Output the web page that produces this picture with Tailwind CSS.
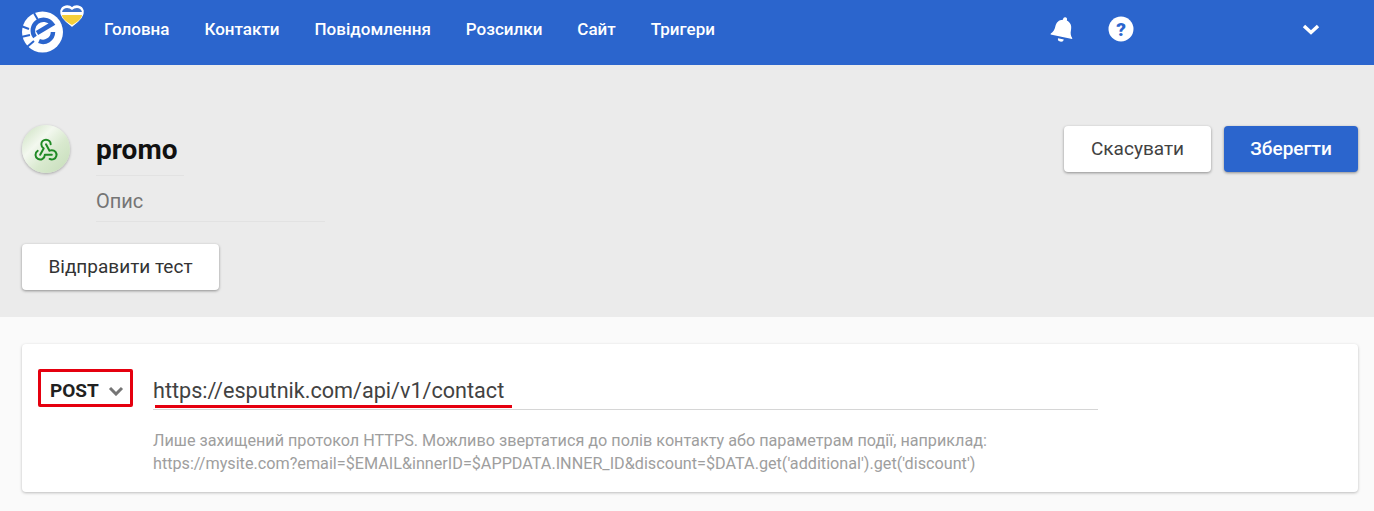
<!DOCTYPE html>
<html lang="uk">
<head>
    <meta charset="UTF-8">
    <title>promo</title>
    <script src="https://cdn.jsdelivr.net/npm/@tailwindcss/browser@4"></script>
</head>
<body class="bg-[#fafafa] font-['Roboto',sans-serif] text-[#212121] h-[511px] overflow-hidden">
    <nav class="h-[65px] bg-[#2b65cd] flex items-center text-white">
        <div class="relative w-[104px] h-[65px] shrink-0">
            <svg class="absolute left-[20px] top-[4px]" width="66" height="50" viewBox="0 0 66 50">
                <!-- logo: white disc, blue e, cuts on the left edge -->
                <circle cx="22.5" cy="28" r="20.5" fill="#fff"/>
                <path d="M1 22l8 3M1 33l9-2M7 43l7-6M14 9l4 7" fill="none" stroke="#2b65cd" stroke-width="2"/>
                <path d="M15 33a10 10 0 0 1 17-13l-15 9" fill="none" stroke="#2b65cd" stroke-width="4.5"/>
                <path d="M33 28a10 10 0 0 1-14 9" fill="none" stroke="#2b65cd" stroke-width="4.5"/>
                <path d="M52 4c3-3 10-3 11 3 1 5-4 10-11 15-7-5-12-10-11-15 1-6 8-6 11-3z" fill="#fff" stroke="#fff" stroke-width="1.5"/>
                <path d="M52 6c3-3 9-3 10 2H42c1-5 7-5 10-2z" fill="#3f72c8"/>
                <path d="M42 11h20c0 3-4 7-10 10-6-3-10-7-10-10z" fill="#f5cf3a"/>
            </svg>
        </div>
        <ul class="flex gap-[35px] text-[17px] leading-[20px] font-medium -mt-[7px]">
            <li>Головна</li>
            <li>Контакти</li>
            <li>Повідомлення</li>
            <li>Розсилки</li>
            <li>Сайт</li>
            <li>Тригери</li>
        </ul>
        <div class="ml-auto flex items-center -mt-[7px]">
            <svg class="rotate-[12deg]" width="24" height="26" viewBox="0 0 24 26" fill="#fff"><path d="M12 1a2 2 0 0 1 2 2v1c4 1 6 4 6 8 0 4 1 6 3 8v1H1v-1c2-2 3-4 3-8 0-4 2-7 6-8V3a2 2 0 0 1 2-2zM9 23h6a3 3 0 0 1-6 0z"/></svg>
            <svg class="ml-[33px]" width="26" height="26" viewBox="0 0 26 26"><circle cx="13" cy="13" r="12.5" fill="#fff"/><text x="13" y="19.5" text-anchor="middle" font-size="19" font-weight="900" font-family="Roboto" fill="#2b65cd">?</text></svg>
            <svg class="ml-[168px] mr-[54px]" width="18" height="11" viewBox="0 0 18 11"><path d="M2 2l7 6.5L16 2" fill="none" stroke="#fff" stroke-width="3.4"/></svg>
        </div>
    </nav>

    <section class="h-[252px] bg-[#ebebeb] pl-[22px] pr-[16px] flex justify-between">
        <div>
            <div class="flex mt-[60px]">
                <div class="w-[48px] h-[48px] rounded-full bg-[linear-gradient(135deg,#cfe3c4_5%,#f3f8ef_35%,#d9e9cf_60%,#c5ddb8_100%)] shadow-[0_1px_3px_rgba(0,0,0,0.3)] flex items-center justify-center">
                    <svg width="28" height="28" viewBox="0 0 24 24" fill="none" stroke="#1f8a24" stroke-width="1.7" stroke-linecap="round" stroke-linejoin="round"><path d="M4.876 13.61a4 4 0 1 0 6.124 3.39h6"/><path d="M15.066 20.502a4 4 0 1 0 1.934 -7.502c-.706 0 -1.424 .179 -2 .5l-3 -5.5"/><path d="M16 8a4 4 0 1 0 -8 0c0 1.506 .77 2.818 2 3.5l-3 5.5"/></svg>
                </div>
                <div class="ml-[26px]">
                    <div class="w-[88px] h-[51px] border-b border-[#e2e2e2] text-[28px] leading-[50px] font-bold text-[#111]">promo</div>
                    <div class="w-[229px] h-[46px] border-b border-[#e2e2e2] text-[20px] leading-[50px] text-[#757575]">Опис</div>
                </div>
            </div>
            <button class="mt-[22px] w-[197px] h-[46px] bg-white rounded-[4px] text-[19px] text-[#333] shadow-[0_1px_3px_rgba(0,0,0,0.4)]">Відправити тест</button>
        </div>
        <div class="flex gap-[13px] mt-[61px] h-[46px]">
            <button class="w-[147px] bg-white rounded-[4px] text-[19px] text-[#424242] shadow-[0_1px_3px_rgba(0,0,0,0.4)]">Скасувати</button>
            <button class="w-[134px] bg-[#2b65cd] text-white font-medium rounded-[4px] text-[19px] shadow-[0_1px_3px_rgba(0,0,0,0.4)]">Зберегти</button>
        </div>
    </section>

    <section class="pl-[22px] pr-[16px] pt-[27px]">
        <div class="h-[148px] bg-white rounded-[4px] shadow-[0_1px_3px_rgba(0,0,0,0.25)] pl-[16px] pt-[25px]">
            <div class="flex">
                <div class="w-[95px] h-[38px] border-[3px] border-[#e5000f] rounded-[2px] flex items-center pl-[9px] text-[19px] font-bold text-[#212121]">
                    <span class="mt-[6px]">POST</span>
                    <svg class="ml-[9px] mt-[6px]" width="16" height="10" viewBox="0 0 16 10"><path d="M2 2l6 6 6-6" fill="none" stroke="#757575" stroke-width="3"/></svg>
                </div>
                <div class="ml-[20px] w-[945px] h-[41px] border-b border-[#d6d6d6] relative">
                    <span class="text-[21.6px] leading-[43px] text-[#424242]">https://esputnik.com/api/v1/contact</span>
                    <span class="absolute left-[2px] top-[36px] w-[357px] h-[3px] bg-[#e5000f]"></span>
                </div>
            </div>
            <p class="ml-[115px] mt-[19px] text-[16.2px] leading-[23px] text-[#9e9e9e]">Лише захищений протокол HTTPS. Можливо звертатися до полів контакту або параметрам події, наприклад:<br>https://mysite.com?email=$EMAIL&amp;innerID=$APPDATA.INNER_ID&amp;discount=$DATA.get('additional').get('discount')</p>
        </div>
    </section>
</body>
</html>
